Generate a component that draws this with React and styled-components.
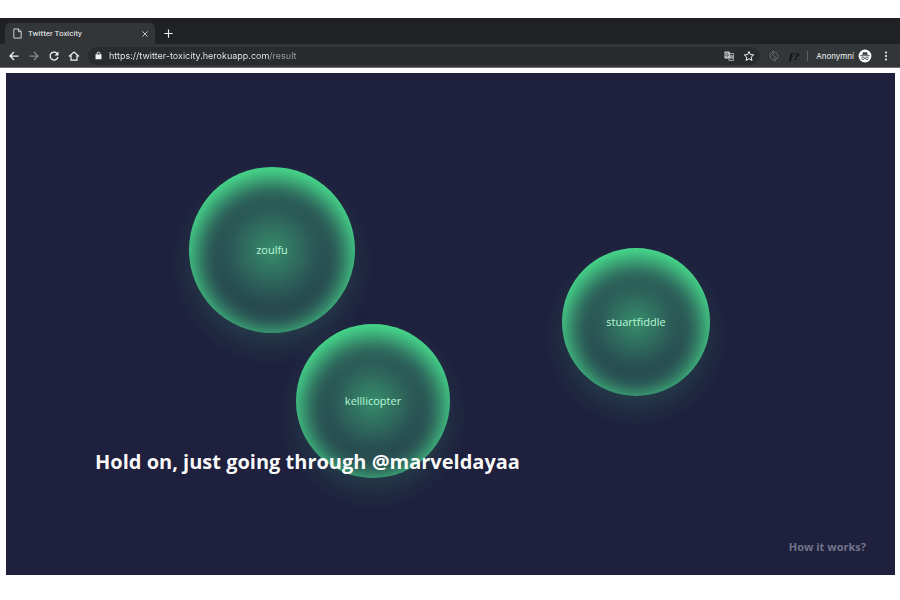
import React from 'react';
import styled, { createGlobalStyle } from 'styled-components';

const GlobalStyle = createGlobalStyle`
    * {
        box-sizing: border-box;
    }
    body {
        margin: 0;
        background: #fff;
    }
    button {
        display: flex;
        padding: 0;
        border: none;
        background: none;
        color: inherit;
        font: inherit;
        cursor: pointer;
    }
`;

const Page = styled.div`
    display: flex;
    flex-direction: column;
    min-height: 100vh;
    padding: 18px 0 25px;
    font-family: 'Open Sans', 'Noto Sans', sans-serif;
`;

const Browser = styled.header`
    background: #202124;
    border-bottom: 1px solid #6b6d70;
    color: #f1f3f4;
    font: 8px/12px Inter, Roboto, sans-serif;
`;
const TabStrip = styled.div`
    display: flex;
    align-items: center;
    gap: 8px;
    height: 26px;
    padding: 5px 5px 0;
`;
const Tab = styled.div`
    display: flex;
    align-items: center;
    gap: 5px;
    width: 150px;
    height: 21px;
    padding: 0 6px 0 7px;
    border-radius: 5px 5px 0 0;
    background: #323639;
    color: #dcdee0;
    font-family: Roboto, sans-serif;
`;
const TabTitle = styled.span`
    flex-grow: 1;
    color: #f1f3f4;
`;
const Toolbar = styled.nav`
    display: flex;
    align-items: center;
    gap: 8px;
    height: 23px;
    padding: 0 8px;
    background: #323639;
`;
const Address = styled.div`
    display: flex;
    flex-grow: 1;
    align-items: center;
    gap: 8px;
    height: 18px;
    padding: 0 5px 0 6px;
    border-radius: 9px;
    background: #292c2f;
`;
/* host is bright, the path after it is dimmed */
const AddressInput = styled.input`
    flex-grow: 1;
    min-width: 0;
    margin-left: -2px;
    padding: 0;
    border: none;
    outline: none;
    background: linear-gradient(90deg, #f1f3f4 160px, #9aa0a6 160px);
    background-clip: text;
    color: transparent;
    font: 9px/12px Inter, Roboto, sans-serif;
`;
const Extensions = styled.div`
    display: flex;
    align-items: center;
    gap: 8px;
    color: #64676b;
`;
const FontExtension = styled.button`
    && {
        color: #0c0d0e;
        font: italic bold 11px/12px 'Liberation Serif', serif;
    }
`;
const Divider = styled.span`
    width: 1px;
    height: 10px;
    background: #5f6368;
`;
const Profile = styled.button`
    && {
        align-items: center;
        gap: 4px;
    }
`;

const Stage = styled.main`
    position: relative;
    display: flex;
    flex: 1;
    flex-direction: column;
    justify-content: flex-end;
    gap: 63px;
    margin: 5px 5px 0 6px;
    padding: 0 29px 20px 89px;
    overflow: hidden;
    background: #1f203e;
`;
const Bubble = styled.div`
    position: absolute;
    left: ${({ $x }) => $x}px;
    top: ${({ $y }) => $y}px;
    display: flex;
    align-items: center;
    justify-content: center;
    width: ${({ $size }) => $size}px;
    height: ${({ $size }) => $size}px;
    border-radius: 50%;
    background: radial-gradient(circle closest-side, rgba(74, 232, 146, 0.54), rgba(74, 232, 146, 0.06) 95%);
    box-shadow:
        inset 0 7px 26px 8px #4ae892,
        0 14px 32px -4px rgba(74, 232, 146, 0.18);
    color: #b9f8d6;
    font-size: 11px;
    line-height: 14px;
`;
const Title = styled.h1`
    position: relative;
    margin: 0;
    color: rgba(255, 255, 255, 0.97);
    font-size: 20px;
    font-weight: 700;
    line-height: 28px;
`;
const HelpLink = styled.a`
    position: relative;
    align-self: flex-end;
    color: #73748a;
    font-size: 11px;
    font-weight: 700;
    line-height: 16px;
    text-decoration: none;
`;

const Icon = ({ size = 12, children, ...rest }) => (
    <svg
        width={size}
        height={size}
        viewBox="0 0 24 24"
        fill="none"
        stroke="currentColor"
        strokeWidth="2.5"
        aria-hidden="true"
        {...rest}
    >
        {children}
    </svg>
);

const bubbles = [
    { name: 'zoulfu', x: 183, y: 94, size: 166 },
    { name: 'kelllicopter', x: 290, y: 251, size: 154 },
    { name: 'stuartfiddle', x: 556, y: 175, size: 148 },
];

const BrowserBar = () => (
    <Browser>
        <TabStrip>
            <Tab>
                <Icon size={11} strokeWidth="2">
                    <path d="M4 2h10l6 6v14H4zM14 2v6h6" />
                </Icon>
                <TabTitle>Twitter Toxicity</TabTitle>
                <button type="button" aria-label="Close tab">
                    <Icon size={8}>
                        <path d="M4 4l16 16M20 4L4 20" />
                    </Icon>
                </button>
            </Tab>
            <button type="button" aria-label="New tab">
                <Icon size={11}>
                    <path d="M12 3v18M3 12h18" />
                </Icon>
            </button>
        </TabStrip>
        <Toolbar>
            <button type="button" aria-label="Back">
                <Icon>
                    <path d="M21 12H4M12 4l-8 8 8 8" />
                </Icon>
            </button>
            <button type="button" aria-label="Forward">
                <Icon color="#85888c">
                    <path d="M3 12h17M12 4l8 8-8 8" />
                </Icon>
            </button>
            <button type="button" aria-label="Reload">
                <Icon>
                    <path d="M18 6.5A8 8 0 1 0 20 14" />
                    <path d="M21 3v8h-8z" fill="currentColor" stroke="none" />
                </Icon>
            </button>
            <button type="button" aria-label="Home">
                <Icon>
                    <path d="M2 13L12 4l10 9M6 11v9h12v-9" />
                </Icon>
            </button>
            <Address>
                <Icon size={9}>
                    <path d="M4 9h16v13H4z" fill="currentColor" stroke="none" />
                    <path d="M8 10V7a4 4 0 0 1 8 0v3" />
                </Icon>
                <AddressInput
                    type="text"
                    aria-label="Address"
                    defaultValue="https://twitter-toxicity.herokuapp.com/result"
                />
                <button type="button" aria-label="Translate">
                    <Icon>
                        <path d="M3 3h10l3 14H3z" fill="#c4c7ca" stroke="none" />
                        <path d="M11 10a3 3 0 1 1-1-3M8 10h3" stroke="#323639" strokeWidth="1.5" />
                        <path
                            d="M14 7h7v14h-9l-1-4M14 12h6M17 10v2M19 12c0 3-2 5-4 6M16 13l4 5"
                            stroke="#c4c7ca"
                            strokeWidth="1.5"
                        />
                    </Icon>
                </button>
                <button type="button" aria-label="Bookmark">
                    <Icon strokeWidth="2">
                        <path d="M12 3l2.7 6.2 6.8.6-5.1 4.5 1.5 6.6-5.9-3.5-5.9 3.5 1.5-6.6-5.1-4.5 6.8-.6z" />
                    </Icon>
                </button>
            </Address>
            <Extensions>
                <button type="button" aria-label="Sync extension">
                    <Icon strokeWidth="2">
                        <path d="M9 4a9 9 0 0 1 10 13M15 20A9 9 0 0 1 5 7" />
                        <path d="M12 1L8 4l4 4M12 16l4 4-4 3M6 6l12 12" />
                    </Icon>
                </button>
                <FontExtension type="button">ƒ?</FontExtension>
                <Divider />
            </Extensions>
            <Profile type="button">
                Anonymní
                <Icon size={14}>
                    <circle cx="12" cy="12" r="11" fill="#fff" stroke="none" />
                    <path d="M7 10l2-5 3 1 3-1 2 5z" fill="#323639" stroke="none" />
                    <path d="M4 11.5h16" stroke="#323639" strokeWidth="1.5" />
                    <path d="M10.5 16q1.5-1 3 0" stroke="#323639" strokeWidth="1.2" />
                    <circle cx="8.5" cy="16" r="2.2" stroke="#323639" strokeWidth="1.2" />
                    <circle cx="15.5" cy="16" r="2.2" stroke="#323639" strokeWidth="1.2" />
                </Icon>
            </Profile>
            <button type="button" aria-label="Menu">
                <Icon>
                    <g fill="currentColor" stroke="none">
                        <circle cx="12" cy="5" r="2.2" />
                        <circle cx="12" cy="12" r="2.2" />
                        <circle cx="12" cy="19" r="2.2" />
                    </g>
                </Icon>
            </button>
        </Toolbar>
    </Browser>
);

export default function App() {
    return (
        <Page>
            <GlobalStyle />
            <BrowserBar />
            <Stage>
                {bubbles.map(({ name, x, y, size }) => (
                    <Bubble key={name} $x={x} $y={y} $size={size}>
                        {name}
                    </Bubble>
                ))}
                <Title>Hold on, just going through @marveldayaa</Title>
                <HelpLink href="#how">How it works?</HelpLink>
            </Stage>
        </Page>
    );
}
